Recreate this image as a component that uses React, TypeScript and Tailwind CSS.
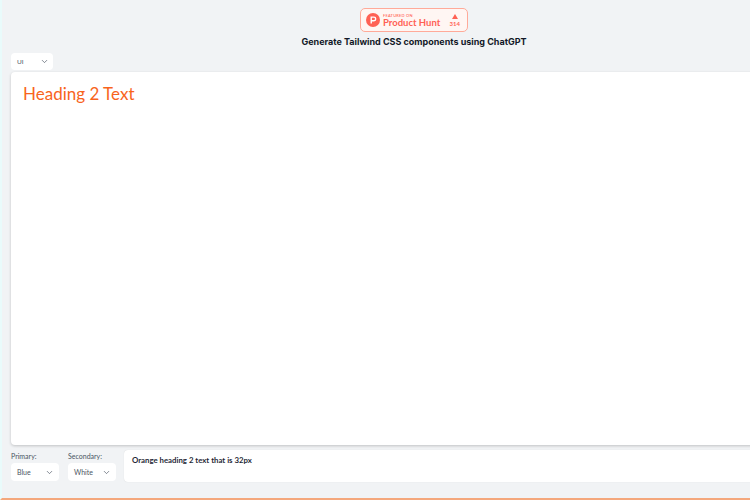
import { ChevronDown } from "lucide-react";

function Select({ value, className }: { value: string; className: string }) {
  return (
    <div className={`flex items-center justify-between rounded-[4px] bg-white text-[#4b5563] ${className}`}>
      <span>{value}</span>
      <ChevronDown size={9} strokeWidth={1.8} className="text-[#4b5563]" />
    </div>
  );
}

function ProductHuntBadge() {
  return (
    <div className="flex h-[24px] w-[108px] items-center rounded-[5px] border border-[#ffaa99] bg-[#fff6f3] pl-[5px] pr-[7px]">
      <svg width="14" height="14" viewBox="0 0 26 26" className="shrink-0">
        <circle cx="13" cy="13" r="13" fill="#ff6154" />
        <path d="M14.7 13H11v-4h3.7a2 2 0 0 1 0 4zm0-6.6H8.4v13.2H11v-4h3.7a4.6 4.6 0 0 0 0-9.2z" fill="#fff" />
      </svg>
      <div className="ml-[3px] flex flex-col text-[#ff6154]">
        <span className="text-[4px] leading-[5px] font-medium tracking-[0.2px]">FEATURED ON</span>
        <span className="text-[9.5px] leading-[10px] font-bold">Product Hunt</span>
      </div>
      <div className="ml-auto flex flex-col items-center text-[#ff6154]">
        <svg width="6" height="5" viewBox="0 0 6 5">
          <path d="M3 0l3 5H0z" fill="#ff6154" />
        </svg>
        <span className="mt-[1px] text-[6px] leading-[7px] font-bold">314</span>
      </div>
    </div>
  );
}

export default function App() {
  return (
    <div className="h-[500px] w-[750px] overflow-hidden">
      <div className="flex h-[500px] w-[817px] flex-col border-b-2 border-l-2 border-b-[#f4a77c] border-l-[#e9fbfb] bg-[#f1f3f5] pl-[9px] font-['Lato','Liberation_Sans',sans-serif]">
        <div className="flex flex-col items-center pt-[8px]">
          <ProductHuntBadge />
          <h1 className="mt-[4px] font-['Inter','Liberation_Sans',sans-serif] text-[9px] leading-[12px] font-bold text-[#111827]">
            Generate Tailwind CSS components using ChatGPT
          </h1>
        </div>
        <Select value="UI" className="mt-[5px] h-[17px] w-[42px] shrink-0 pr-[4px] pl-[6px] text-[6.5px]" />
        <div className="mt-[2px] h-[373px] shrink-0 rounded-l-[4px] bg-white pt-[11px] pl-[12px] shadow-[0_1px_3px_rgba(0,0,0,0.2)]">
          <h2 className="text-[17px] leading-[22px] text-[#f8641c]">Heading 2 Text</h2>
        </div>
        <div className="mt-[5px] flex gap-[8px]">
          <div className="flex gap-[9px] pt-[2px]">
            <div>
              <div className="mb-[2px] text-[7px] leading-[9px] text-[#4b5563]">Primary:</div>
              <Select value="Blue" className="h-[18px] w-[48px] pr-[5px] pl-[6px] text-[7px]" />
            </div>
            <div>
              <div className="mb-[2px] text-[7px] leading-[9px] text-[#4b5563]">Secondary:</div>
              <Select value="White" className="h-[18px] w-[48px] pr-[5px] pl-[6px] text-[7px]" />
            </div>
          </div>
          <div className="h-[32px] flex-1 rounded-l-[4px] bg-white pt-[5px] pl-[8px] text-[7.8px] leading-[10px] font-bold text-[#1f2937] shadow-[0_0_1px_rgba(0,0,0,0.15)]">
            Orange heading 2 text that is 32px
          </div>
        </div>
      </div>
    </div>
  );
}
